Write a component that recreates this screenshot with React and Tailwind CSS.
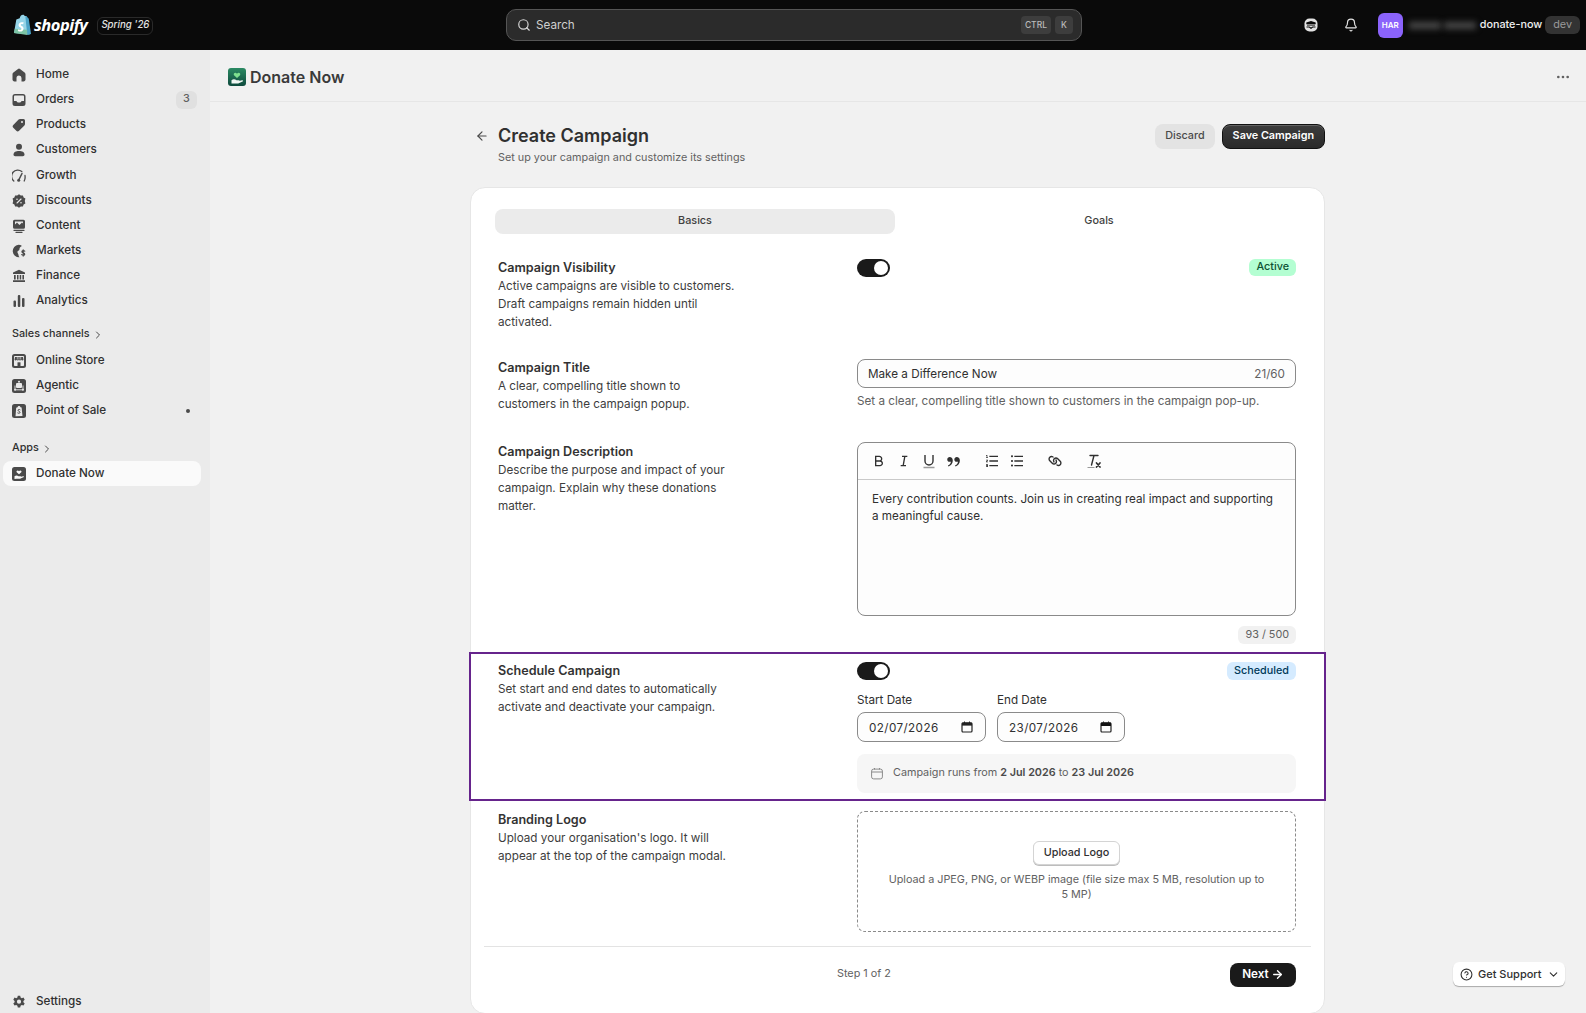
import { Bell, ChevronDown, ChevronRight, ArrowLeft, ArrowRight, Search, CircleHelp, Ellipsis } from "lucide-react";
import { RiBold, RiItalic, RiDoubleQuotesR, RiListOrdered, RiListUnordered } from "react-icons/ri";
import { FaLink } from "react-icons/fa6";

const fill = "#4a4a4a";

function HomeIcon() {
  return <svg viewBox="0 0 14 14" className="h-[14px] w-[14px]"><path fill={fill} d="M6 .9a1.6 1.6 0 0 1 2 0l4.6 3.7c.5.4.9 1 .9 1.7v5.2c0 1-.8 1.9-1.9 1.9H9.5V10a2.5 2.5 0 0 0-5 0v3.4H2.4c-1 0-1.9-.9-1.9-1.9V6.300c0-.7.3-1.300.9-1.700z" /></svg>;
}
function OrdersIcon() {
  return <svg viewBox="0 0 14 14" className="h-[14px] w-[14px]"><path fill={fill} fillRule="evenodd" d="M3 1h8a2.500 2.500 0 0 1 2.500 2.500v7A2.500 2.500 0 0 1 11 13H3a2.500 2.500 0 0 1-2.500-2.500v-7A2.500 2.500 0 0 1 3 1m-1 7h2.500c.3 1 1.200 1.500 2.500 1.500S9.200 9 9.500 8H12V3.500C12 3 11.500 2.500 11 2.500H3c-.5 0-1 .5-1 1z" /></svg>;
}
function TagIcon() {
  return <svg viewBox="0 0 14 14" className="h-[14px] w-[14px]"><path fill={fill} d="M8 1h3.500A1.500 1.500 0 0 1 13 2.500V6c0 .5-.2 1-.6 1.400l-5.300 5.300a2 2 0 0 1-2.800 0L1.300 9.700a2 2 0 0 1 0-2.800l5.300-5.300C7 1.200 7.500 1 8 1" /><circle cx="10" cy="4" r="1" fill="#ebebeb" /></svg>;
}
function PersonIcon() {
  return <svg viewBox="0 0 14 14" className="h-[14px] w-[14px]"><circle cx="7" cy="3.700" r="3" fill={fill} /><path fill={fill} d="M1.500 11.500C1.500 9 4 8 7 8s5.500 1 5.500 3.500c0 1-.7 1.700-1.700 1.700H3.200c-1 0-1.700-.7-1.700-1.700" /></svg>;
}
function GrowthIcon() {
  return <svg viewBox="0 0 14 14" fill="none" className="h-[14px] w-[14px]"><path stroke={fill} strokeWidth="1.300" strokeLinecap="round" d="M1.800 12a6 6 0 0 1 8-9.500M13 6.500c.3 2 0 4-.8 5.500" /><path stroke={fill} strokeWidth="1.500" strokeLinecap="round" d="M7 10.500 10 4.500" /><circle cx="6.700" cy="11.200" r="1.500" fill={fill} /></svg>;
}
function DiscountIcon() {
  return <svg viewBox="0 0 14 14" className="h-[14px] w-[14px]"><path fill={fill} d="M7 .3 8.800 1.500l2.100-.1.700 2 1.800 1.200L12.800 7l.6 2.400-1.800 1.200-.7 2-2.100-.1L7 13.700l-1.800-1.200-2.100.1-.7-2L.6 9.400 1.200 7 .6 4.600l1.800-1.200.7-2 2.100.1z" /><path stroke="#ebebeb" strokeWidth="1.100" strokeLinecap="round" d="M5 9l4-4" /><circle cx="5" cy="5.200" r=".8" fill="#ebebeb" /><circle cx="9" cy="8.800" r=".8" fill="#ebebeb" /></svg>;
}
function ContentIcon() {
  return <svg viewBox="0 0 14 14" className="h-[14px] w-[14px]"><path fill={fill} fillRule="evenodd" d="M2.500 .8h9A1.500 1.500 0 0 1 13 2.300v6a1.500 1.500 0 0 1-1.500 1.500h-9A1.500 1.500 0 0 1 1 8.300v-6A1.500 1.500 0 0 1 2.500 .8M3 5.500l2-2 2.500 2.500L10 3.500 11 4.500V2.500H3z" /><path stroke={fill} strokeWidth="1.300" strokeLinecap="round" d="M2 11.300h10M4 13.300h6" /></svg>;
}
function MarketsIcon() {
  return <svg viewBox="0 0 14 14" className="h-[14px] w-[14px]"><path fill={fill} d="M6.500.7a6 6 0 0 1 3.500 1.200C8.500 2.500 7.500 3.500 7.500 5c0 1.700-1.500 1.500-2 2.500s1 2 1 3.500c0 1 .4 1.700 1 2.200A6.200 6.200 0 1 1 6.500.7" /><path stroke={fill} strokeWidth="1.200" strokeLinecap="round" fill="none" d="M12.700 7.200c-.6-.7-2.700-.8-2.800.5-.1 1.400 2.800 1 2.800 2.500 0 1.300-2.300 1.200-3 .4M11.200 5.800v6.300" /></svg>;
}
function FinanceIcon() {
  return <svg viewBox="0 0 14 14" className="h-[14px] w-[14px]"><path fill={fill} d="M7 .7 13 3.500V5H1V3.500zM2 6h1.700v4.500H2zM5 6h1.500v4.500H5zM7.700 6h1.500v4.500H7.700zM10.400 6H12v4.500h-1.600zM1 11.300h12v1.700H1z" /></svg>;
}
function AnalyticsIcon() {
  return <svg viewBox="0 0 14 14" className="h-[14px] w-[14px]"><rect x="1.500" y="6.500" width="2.500" height="6.500" rx="1" fill={fill} /><rect x="5.800" y="1" width="2.500" height="12" rx="1" fill={fill} /><rect x="10" y="4" width="2.500" height="9" rx="1" fill={fill} /></svg>;
}
function StoreIcon() {
  return <svg viewBox="0 0 14 14" className="h-[14px] w-[14px]"><rect width="14" height="14" rx="2.500" fill={fill} /><rect x="2" y="2" width="10" height="10" rx=".8" fill="#ebebeb" /><path fill={fill} d="M3 3h8l.5 2.700c-.3 1-1.900 1-2.300 0-.4 1-2 1-2.300 0-.3 1-1.900 1-2.200 0-.4 1-1.900 1-2.200 0z" /><path stroke="#ebebeb" strokeWidth=".6" d="M5.300 3v2.500M7 3v2.500M8.700 3v2.500" /><rect x="5.500" y="8.300" width="3" height="3.700" fill={fill} /></svg>;
}
function AgenticIcon() {
  return <svg viewBox="0 0 14 14" className="h-[14px] w-[14px]"><rect width="14" height="14" rx="2.500" fill={fill} /><rect x="4" y="4" width="6" height="5" rx="1" fill="#ebebeb" /><circle cx="7" cy="2.800" r="1" fill="#ebebeb" /><circle cx="3" cy="10.800" r="1" fill="#ebebeb" /><circle cx="11" cy="10.800" r="1" fill="#ebebeb" /><path stroke="#ebebeb" strokeWidth=".9" fill="none" d="M3 10.800h8M3 10V6.500M11 10V6.500" /></svg>;
}
function PosIcon() {
  return <svg viewBox="0 0 14 14" className="h-[14px] w-[14px]"><rect width="14" height="14" rx="2.500" fill={fill} /><path fill="#ebebeb" d="M4.200 3.800 5.500 3.300C6 1.500 8 1.500 8.500 3.300l1.100.2.900 8.500-7 .3z" /><path stroke={fill} strokeWidth="1" strokeLinecap="round" fill="none" d="M8 5.700c-.7-.5-2-.3-2 .6 0 1 2 1 2 2.100s-1.400 1.100-2.200.6" /></svg>;
}
function DonateSmallIcon() {
  return <svg viewBox="0 0 14 14" className="h-[14px] w-[14px]"><rect width="14" height="14" rx="2.500" fill={fill} /><path fill="#fafafa" d="M7 7.300 4.700 5.200C3.800 4 5.800 2.800 7 4.200 8.200 2.800 10.200 4 9.300 5.200zM2.500 9.200c1.500-1 2.800-.8 4 0h2c.8 0 .8 1 0 1H7l4-1c1-.2 1.200.6.500 1l-3.500 1.600H4.500l-2 .2z" /></svg>;
}
function DonateLogo() {
  return (
    <svg viewBox="0 0 18 18" className="h-[18px] w-[18px]">
      <defs>
        <linearGradient id="dn" x1="0" y1="0" x2="0" y2="1">
          <stop offset="0" stopColor="#2b8a63" />
          <stop offset="1" stopColor="#0e4a3d" />
        </linearGradient>
      </defs>
      <rect width="18" height="18" rx="3" fill="url(#dn)" />
      <path fill="#7fe08f" d="M9 10 6 7.200C4.800 5.500 7.500 3.800 9 5.700c1.500-1.900 4.200-.2 3 1.500z" />
      <path fill="#f2f7f4" d="M3.500 12.200c1.800-1.300 3.500-1 5 0h2.300c1 0 1 1.200 0 1.200H9l5-1.200c1.200-.2 1.400.8.600 1.200l-4.400 2H6l-2.500.2z" />
    </svg>
  );
}
function ShopifyBag() {
  return (
    <svg viewBox="0 0 20 22" className="h-[22px] w-[19px]">
      <path fill="#95d4e8" d="M1 19.500 3.500 5.300 7 4c.6-2.500 2-3.700 3.500-3.700.9 0 1.500.5 1.800 1.300L14 1.500 17.500 21z" />
      <path fill="#4ba3c7" d="M14 1.500 13 1.800 15 21.500l4-1-2.400-16.200z" />
      <path fill="#7dc4a5" d="M1 19.500 15 21.500 14.800 16 2 15z" />
      <path fill="#fff" d="M11.300 8.400c-.6-.3-1.400-.5-2.200-.4-2 .2-3.300 1.700-3.200 3.300.1 2.200 2.900 2.300 3 3.600 0 .7-.8 1-1.400 1-.8 0-1.900-.5-1.900-.5l-.5 1.800s1 .7 2.500.7c2 0 3.500-1.400 3.500-3.300 0-2.500-2.900-2.700-3-3.700 0-.4.400-.8 1.200-.9.700 0 1.300.3 1.300.3z" />
    </svg>
  );
}
function TopBarBotIcon() {
  return (
    <svg viewBox="0 0 14 14" className="h-[14px] w-[14px]">
      <rect x=".5" y=".5" width="13" height="13" rx="5" fill="#e3e3e3" />
      <path fill="#0a0a0a" d="M2.300 4.500 7 3l4.700 1.500v1.700H2.300zM2.500 8.500h3l1.500 1 1.500-1h3v1h-2.500L7 11 5 9.500H2.500z" />
      <path stroke="#0a0a0a" strokeWidth=".8" d="M3 7.200h8" />
    </svg>
  );
}
function UnderlineIcon() {
  return (
    <svg viewBox="0 0 16 16" fill="none" className="h-[16px] w-[16px]">
      <path stroke="#303030" strokeWidth="1.400" d="M4 2v6a4 4 0 0 0 8 0V2" />
      <path stroke="#9a9a9a" strokeWidth="1.400" d="M2.500 14.500h11" />
    </svg>
  );
}
function ClearFormatIcon() {
  return (
    <svg viewBox="0 0 16 16" fill="none" className="h-[16px] w-[16px]">
      <path stroke="#303030" strokeWidth="1.400" strokeLinecap="round" d="M4 2.500h8M8 2.500 5.500 12" />
      <path stroke="#9a9a9a" strokeWidth="1" d="M1.500 14.500h7" />
      <path stroke="#303030" strokeWidth="1.700" strokeLinecap="round" d="m10.500 10 3.500 4M14 10l-3.500 4" />
    </svg>
  );
}
function DateIcon({ dark }) {
  return (
    <svg viewBox="0 0 12 12" className="h-[12px] w-[12px]" fill="none">
      <rect x="1" y="1.800" width="10" height="9.200" rx="1" stroke="#222" strokeWidth="1.200" />
      <rect x="1" y="1.800" width="10" height="2.800" fill="#222" />
      {dark && <rect x="1" y="1.800" width="10" height="3.200" fill="#111" />}
      <path stroke="#222" strokeWidth="1" d="M3.500 .5v2M8.500 .5v2" />
    </svg>
  );
}

const mainNav = [
  ["Home", HomeIcon],
  ["Orders", OrdersIcon, "3"],
  ["Products", TagIcon],
  ["Customers", PersonIcon],
  ["Growth", GrowthIcon],
  ["Discounts", DiscountIcon],
  ["Content", ContentIcon],
  ["Markets", MarketsIcon],
  ["Finance", FinanceIcon],
  ["Analytics", AnalyticsIcon],
];

function NavItem({ label, Icon, badge, dot, active, extra }) {
  return (
    <div className={"ml-[3px] mr-[9px] flex h-[25px] items-center rounded-lg pl-[9px] pr-[4px] text-[11.700px] font-medium text-[#303030] " + (active ? "bg-[#fafafa] " : "") + (extra || "")}>
      <span className="mr-[10px] flex w-[14px] justify-center"><Icon /></span>
      <span className="flex-1">{label}</span>
      {badge && <span className="flex h-[18px] w-[21px] items-center justify-center rounded-md bg-[#e0e0e0] text-[10.800px] text-[#616161]">{badge}</span>}
      {dot && <span className="mr-[7px] h-[4px] w-[4px] rounded-full bg-[#4a4a4a]" />}
    </div>
  );
}

function Sidebar() {
  return (
    <aside className="flex w-[210px] shrink-0 flex-col bg-[#ebebeb] pt-[12px]">
      {mainNav.map(([label, Icon, badge]) => (
        <NavItem key={label} label={label} Icon={Icon} badge={badge} extra={label === "Growth" ? "mt-[1px]" : ""} />
      ))}
      <div className="mt-[9px] flex h-[25px] items-center pl-[12px] text-[10.800px] font-medium text-[#303030]">
        Sales channels <ChevronRight size={12} className="ml-[2px] text-[#4a4a4a]" />
      </div>
      <div className="mt-[1px]">
        <NavItem label="Online Store" Icon={StoreIcon} />
        <NavItem label="Agentic" Icon={AgenticIcon} />
        <NavItem label="Point of Sale" Icon={PosIcon} dot />
      </div>
      <div className="mt-[13px] flex h-[25px] items-center pl-[12px] text-[10.800px] font-medium text-[#303030]">
        Apps <ChevronRight size={12} className="ml-[2px] text-[#4a4a4a]" />
      </div>
      <NavItem label="Donate Now" Icon={DonateSmallIcon} active />
      <div className="mt-auto mb-[-1px]">
        <div className="mx-[3px] flex h-[25px] items-center pl-[9px] text-[11.700px] font-medium text-[#303030]">
          <span className="mr-[10px] flex w-[14px] justify-center">
            <svg viewBox="0 0 14 14" className="h-[14px] w-[14px]"><path fill={fill} fillRule="evenodd" d="M5.800.7h2.400l.4 1.800 1.200.7 1.700-.6L12.700 4.700l-1.300 1.200v1.400l1.300 1.200-1.200 2.100-1.700-.6-1.200.7-.4 1.800H5.800l-.4-1.800-1.200-.7-1.700.6L1.300 8.500l1.300-1.200V5.900L1.300 4.700l1.200-2.100 1.700.6 1.200-.7zM7 8.800a2.100 2.100 0 1 0 0-4.200 2.100 2.100 0 0 0 0 4.200" /></svg>
          </span>
          Settings
        </div>
      </div>
    </aside>
  );
}

function TopBar() {
  return (
    <header className="flex h-[50px] shrink-0 items-center bg-[#0a0a0a] pl-[13px] pr-[6px] text-white">
      <div className="flex w-[493px] items-center">
        <ShopifyBag />
        <span className="ml-[2px] text-[16.500px] font-bold italic leading-none tracking-[-0.5px] text-white font-['Open_Sans',sans-serif]">shopify</span>
        <span className="ml-[10px] mt-[1px] flex h-[18px] items-center rounded-md border border-[#2a2a2a] px-[3px] text-[9.700px] font-medium italic text-[#e3e3e3]">Spring '26</span>
      </div>
      <div className="flex h-[32px] w-[576px] items-center rounded-[10px] border border-[#555] bg-[#2b2b2b] pl-[10px] pr-[8px]">
        <Search size={14} className="text-[#d8d8d8]" />
        <span className="ml-[5px] flex-1 pt-[1px] text-[11.700px] text-[#cfcfcf]">Search</span>
        <span className="flex h-[18px] items-center rounded bg-[#3d3d3d] px-[4px] text-[8.500px] font-medium text-[#bbb]">CTRL</span>
        <span className="ml-[4px] flex h-[18px] w-[18px] items-center justify-center rounded bg-[#3d3d3d] text-[8.500px] font-medium text-[#bbb]">K</span>
      </div>
      <div className="ml-auto flex items-center">
        <TopBarBotIcon />
        <Bell size={14} className="ml-[26px] text-[#e3e3e3]" />
        <span className="ml-[20px] flex h-[25px] w-[25px] items-center justify-center rounded-md bg-[#8b63fb] text-[8px] font-semibold">HAR</span>
        <div className="ml-[3px] flex h-[25px] w-[74px] items-center gap-[3px] bg-[#0a0a0a] px-[3px]">
          <span className="h-[7px] w-[32px] bg-[#4a4a4a] blur-[3px]" />
          <span className="h-[7px] w-[32px] bg-[#4a4a4a] blur-[3px]" />
        </div>
        <span className="text-[10.800px] font-medium text-[#f0f0f0]">donate-now</span>
        <span className="ml-[3px] flex h-[18px] items-center rounded-md bg-[#333] px-[8px] text-[10.800px] text-[#9a9a9a]">dev</span>
      </div>
    </header>
  );
}

function Toggle() {
  return (
    <span className="flex h-[18px] w-[33px] items-center justify-end rounded-full bg-[#1a1a1a] pr-[2px]">
      <span className="h-[14px] w-[14px] rounded-full bg-white" />
    </span>
  );
}

function Copy({ title, lines, nudge }) {
  return (
    <div className={"ml-[27px] w-[359px] shrink-0 text-[11.700px] leading-[18px] text-[#3d3d3d] " + (nudge ? "pt-[1px]" : "")}>
      <div className="text-[12.600px] font-semibold text-[#333]">{title}</div>
      {lines.map((l) => <div key={l}>{l}</div>)}
    </div>
  );
}

function DateField({ value, width, dark }) {
  return (
    <div className={"mt-[3px] flex h-[30px] items-center justify-between rounded-lg border border-[#8a8a8a] bg-[#fdfdfd] pl-[11px] pr-[12px] text-[11.700px] tracking-[0.4px] text-[#303030] " + width}>
      <span className="pt-[1px]">{value}</span>
      <DateIcon dark={dark} />
    </div>
  );
}

function Toolbar() {
  return (
    <div className="flex h-[37px] items-center border-b border-[#c9c9c9] pl-[13px] text-[#303030]">
      <RiBold size={16} />
      <RiItalic size={16} className="ml-[9px]" />
      <span className="ml-[9px]"><UnderlineIcon /></span>
      <RiDoubleQuotesR size={17} className="ml-[8px]" />
      <RiListOrdered size={16} className="ml-[22px]" />
      <RiListUnordered size={16} className="ml-[9px]" />
      <FaLink size={14} className="ml-[23px] -scale-x-100" />
      <span className="ml-[24px]"><ClearFormatIcon /></span>
    </div>
  );
}

function Card() {
  return (
    <section className="rounded-[15px] border border-[#e6e6e6] bg-white pb-[26px]">
      <div className="ml-[24px] mr-[21px] mt-[21px] flex h-[25px] text-[10.800px] font-medium text-[#404040]">
        <div className="flex w-[400px] items-center justify-center rounded-lg bg-[#ebebeb]">Basics</div>
        <div className="flex flex-1 items-center justify-center">Goals</div>
      </div>

      <div className="mt-[24px] flex">
        <Copy nudge title="Campaign Visibility" lines={["Active campaigns are visible to customers.", "Draft campaigns remain hidden until", "activated."]} />
        <div className="flex w-[439px] items-start justify-between pt-[1px]">
          <Toggle />
          <span className="flex h-[17px] items-center rounded-md bg-[#b4fed2] px-[7px] text-[10.800px] font-medium text-[#0c5132]">Active</span>
        </div>
      </div>

      <div className="mt-[28px] flex">
        <Copy title="Campaign Title" lines={["A clear, compelling title shown to", "customers in the campaign popup."]} />
        <div className="w-[439px]">
          <div className="flex h-[29px] items-center justify-between rounded-lg border border-[#8a8a8a] bg-[#fdfdfd] px-[10px] pt-[2px] text-[11.700px] text-[#303030]">
            <span>Make a Difference Now</span>
            <span className="text-[#616161]">21/60</span>
          </div>
          <div className="mt-[4px] text-[11.700px] leading-[18px] text-[#616161]">Set a clear, compelling title shown to customers in the campaign pop-up.</div>
        </div>
      </div>

      <div className="mt-[29px] flex">
        <Copy nudge title="Campaign Description" lines={["Describe the purpose and impact of your", "campaign. Explain why these donations", "matter."]} />
        <div className="w-[439px]">
          <div className="h-[174px] overflow-hidden rounded-lg border border-[#8a8a8a] bg-[#fdfdfd]">
            <Toolbar />
            <p className="px-[14px] pt-[11px] text-[11.700px] leading-[17px] text-[#303030]">
              Every contribution counts. Join us in creating real impact and supporting a meaningful cause.
            </p>
          </div>
          <div className="mt-[10px] flex justify-end">
            <span className="flex h-[18px] items-center rounded-md bg-[#f1f1f1] px-[7px] text-[10.800px] text-[#616161]">93 / 500</span>
          </div>
        </div>
      </div>

      <div className="relative z-10 mx-[-2px] mt-[8px] flex h-[149px] border-2 border-[#66248c] pb-[6px] pt-[8px]">
        <Copy title="Schedule Campaign" lines={["Set start and end dates to automatically", "activate and deactivate your campaign."]} />
        <div className="w-[439px]">
          <div className="flex items-start justify-between">
            <Toggle />
            <span className="flex h-[18px] items-center rounded-md bg-[#d5ebff] px-[7px] text-[10.800px] font-medium text-[#003a5a]">Scheduled</span>
          </div>
          <div className="mt-[11px] flex gap-[11px] text-[11.700px] leading-[18px] text-[#303030]">
            <div>
              <div>Start Date</div>
              <DateField value="02/07/2026" width="w-[129px]" />
            </div>
            <div>
              <div>End Date</div>
              <DateField value="23/07/2026" width="w-[128px]" dark />
            </div>
          </div>
          <div className="mt-[12px] flex h-[39px] items-center rounded-lg bg-[#f6f6f6] pl-[14px] text-[10.800px] text-[#616161]">
            <svg viewBox="0 0 12 12" fill="none" className="mr-[10px] h-[13px] w-[12px]"><rect x=".6" y="1.600" width="10.800" height="9.800" rx="2" stroke="#8a8a8a" /><path stroke="#8a8a8a" d="M.6 4.500h10.800M3.500 .5v1.500M8.500 .5v1.500" /></svg>
            <span>Campaign runs from <b className="font-semibold text-[#4a4a4a]">2 Jul 2026</b> to <b className="font-semibold text-[#4a4a4a]">23 Jul 2026</b></span>
          </div>
        </div>
      </div>

      <div className="mt-[10px] flex">
        <Copy title="Branding Logo" lines={["Upload your organisation's logo. It will", "appear at the top of the campaign modal."]} />
        <div className="flex h-[121px] w-[439px] flex-col items-center rounded-lg border border-dashed border-[#8a8a8a] px-[26px] pt-[29px]">
          <span className="flex h-[24px] items-center rounded-md border border-[#d4d4d4] bg-white px-[10px] text-[10.800px] font-medium text-[#303030] shadow-[0_1px_0_#bdbdbd]">Upload Logo</span>
          <p className="mt-[7px] text-center text-[10.800px] leading-[15px] text-[#616161]">
            Upload a JPEG, PNG, or WEBP image (file size max 5 MB, resolution up to 5 MP)
          </p>
        </div>
      </div>

      <div className="mx-[13px] mt-[14px] border-t border-[#e3e3e3]" />
      <div className="mt-[15px] flex h-[25px] items-center pr-[28px]">
        <span className="ml-[366px] text-[10.800px] text-[#616161]">Step 1 of 2</span>
        <span className="ml-auto flex h-[24px] w-[66px] items-center justify-center gap-[2px] rounded-lg bg-[#1a1a1a] text-[11.700px] font-semibold text-white">
          Next <ArrowRight size={13} strokeWidth={2.500} />
        </span>
      </div>
    </section>
  );
}

export default function App() {
  return (
    <div className="relative flex h-[1013px] w-[1586px] flex-col overflow-hidden bg-[#f1f1f1] font-['Inter',sans-serif]">
      <TopBar />
      <div className="flex min-h-0 flex-1">
        <Sidebar />
        <main className="min-w-0 flex-1">
          <div className="flex h-[52px] items-center justify-between border-b border-[#e6e6e6] pl-[18px] pr-[15px] pt-[3px]">
            <div className="flex items-center">
              <DonateLogo />
              <span className="ml-[4px] text-[16px] font-semibold text-[#3a3a3a]">Donate Now</span>
            </div>
            <Ellipsis size={16} className="text-[#616161]" />
          </div>
          <div className="ml-[260px] w-[855px]">
            <div className="flex h-[85px] items-start justify-between pt-[21px]">
              <div className="flex">
                <ArrowLeft size={14} className="ml-[5px] mt-[6px] text-[#4a4a4a]" />
                <div className="ml-[9px]">
                  <h1 className="text-[18px] font-semibold leading-[25px] text-[#303030]">Create Campaign</h1>
                  <p className="mt-[2px] text-[10.800px] leading-[16px] text-[#616161]">Set up your campaign and customize its settings</p>
                </div>
              </div>
              <div className="mt-[1px] flex gap-[7px]">
                <span className="flex h-[25px] items-center rounded-lg bg-[#e3e3e3] px-[10px] text-[10.800px] font-medium text-[#4a4a4a]">Discard</span>
                <span className="flex h-[25px] items-center rounded-lg border border-[#111] bg-gradient-to-b from-[#3d3d3d] to-[#2a2a2a] px-[10px] text-[10.800px] font-semibold text-white shadow-[inset_0_1px_0_rgba(255,255,255,0.2)]">Save Campaign</span>
              </div>
            </div>
            <Card />
          </div>
        </main>
      </div>
      <div className="absolute left-[1453px] top-[962px] flex h-[24px] w-[112px] items-center rounded-md bg-white pl-[7px] text-[11px] font-medium text-[#303030] shadow-[0_1px_1px_rgba(0,0,0,0.3)]">
        <CircleHelp size={13} className="mr-[5px]" />
        Get Support
        <ChevronDown size={13} className="ml-[5px]" />
      </div>
    </div>
  );
}
